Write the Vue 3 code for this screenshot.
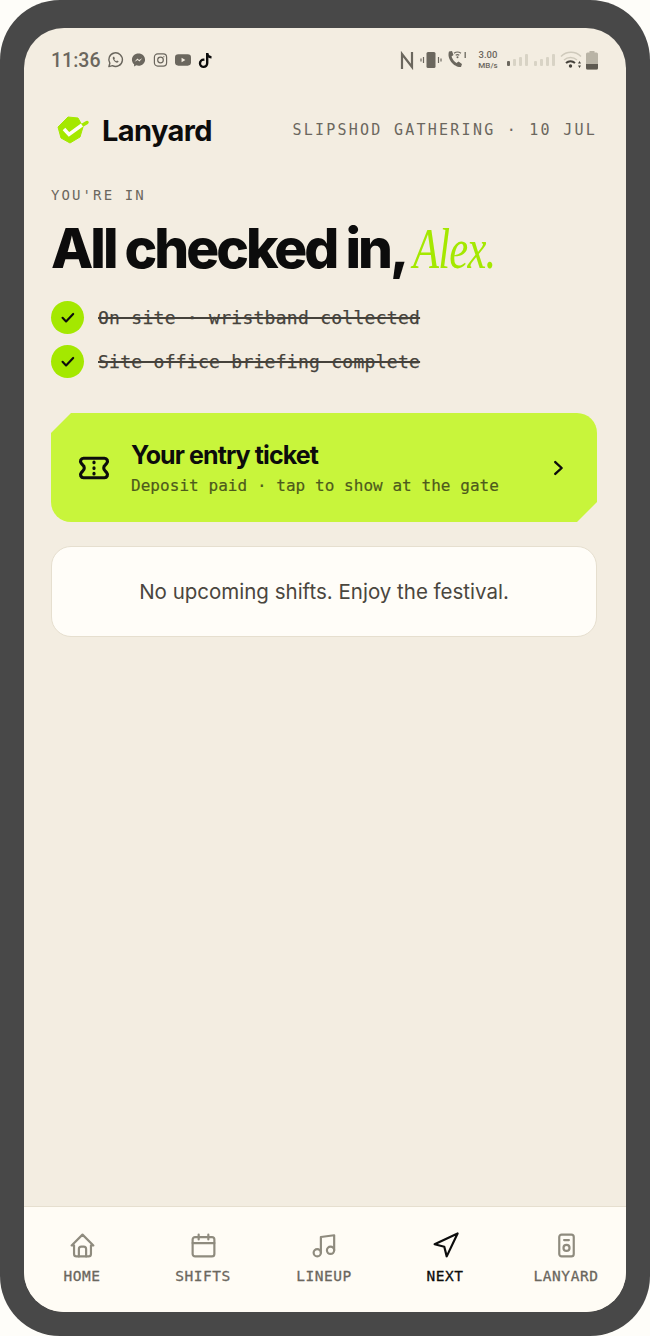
<template>
  <div class="frame">
    <div class="screen">
      <div class="status">
        <div class="status-left">
          <span class="clock">11:36</span>
          <svg width="17" height="18" viewBox="0 0 18 18" fill="none">
            <path d="M2 16l1-3.600A7.200 7.200 0 1 1 5.800 15z" stroke="#6b675e" stroke-width="1.500" stroke-linejoin="round"/>
            <path d="M6.600 5.600c-.8.700-.7 2 .4 3.600s2.500 2.600 3.600 2.600c1 0 1.600-.6 1.700-1.400l-1.700-.9-.8.800c-.9-.4-1.700-1.200-2.100-2.100l.7-.8-.8-1.800z" fill="#6b675e"/>
          </svg>
          <svg width="15" height="16" viewBox="0 0 16 16">
            <path d="M8 1C4 1 1 3.900 1 7.600c0 2 .9 3.700 2.300 4.900V15l2.300-1.300c.8.200 1.600.3 2.400.3 4 0 7-2.900 7-6.400C15 3.900 12 1 8 1z" fill="#6b675e"/>
            <path d="M3.800 9.800l3-3.400 1.800 1.700 3.400-1.900-3 3.400-1.800-1.700z" fill="#f3ede1"/>
          </svg>
          <svg width="15" height="16" viewBox="0 0 16 16" fill="none" stroke="#6b675e">
            <rect x="1.500" y="1.500" width="13" height="13" rx="3.500" stroke-width="1.300"/>
            <circle cx="8" cy="8" r="3" stroke-width="1.300"/>
            <circle cx="11.600" cy="4.400" r=".6" fill="#6b675e" stroke="none"/>
          </svg>
          <svg width="16" height="14" viewBox="0 0 17 14">
            <rect x="0" y="1" width="17" height="12" rx="3.500" fill="#6b675e"/>
            <path d="M7 4.500v5l4-2.500z" fill="#f3ede1"/>
          </svg>
          <svg width="15" height="17" viewBox="0 0 15 17">
            <path d="M8 1h2.400c.2 1.800 1.300 2.900 3.100 3.100v2.400c-1.200 0-2.200-.4-3.100-1v5.800a4.800 4.800 0 1 1-4.800-4.800l.8.100v2.500a2.400 2.400 0 1 0 1.600 2.200z" fill="#0c0c0c"/>
          </svg>
        </div>
        <div class="status-right">
          <svg width="14" height="19" viewBox="0 0 14 19" fill="none" stroke="#6b675e" stroke-width="2.200">
            <path d="M2 18V3l10 13V1" />
          </svg>
          <svg class="gap6" width="22" height="18" viewBox="0 0 22 18">
            <rect x="6.500" y="1" width="9" height="16" rx="1.500" fill="#6b675e"/>
            <path d="M3.500 6v6M1 7.500v3M18.500 6v6M21 7.500v3" stroke="#6b675e" stroke-width="1.200"/>
          </svg>
          <svg class="gap4" width="22" height="20" viewBox="0 0 22 20">
            <path d="M3 1.500L6 1l1.500 4-2 1.500c.8 2.500 2.700 5 5 6.500l2-1.500 3.500 2.500-1 3C8 17.500 .5 9 3 1.500z" fill="#6b675e"/>
            <path d="M8 3.200a6 6 0 0 1 7 0M9.700 5.200a3.400 3.400 0 0 1 3.600 0" stroke="#6b675e" stroke-width="1.100" fill="none"/>
            <circle cx="11.500" cy="7.300" r="1" fill="#6b675e"/>
            <path d="M19.200 2v6" stroke="#6b675e" stroke-width="1.300"/>
          </svg>
          <div class="speed"><span>3.00</span><span class="unit">MB/s</span></div>
          <svg class="bars" width="21" height="12" viewBox="0 0 21 12">
            <rect x="0" y="7" width="3" height="5" rx="1" fill="#6b675e"/>
            <rect x="6" y="5" width="3" height="7" rx="1" fill="#d8d3c5"/>
            <rect x="12" y="3" width="3" height="9" rx="1" fill="#d8d3c5"/>
            <rect x="18" y="0" width="3" height="12" rx="1" fill="#d8d3c5"/>
          </svg>
          <svg class="gap6" width="21" height="12" viewBox="0 0 21 12">
            <rect x="0" y="7" width="3" height="5" rx="1" fill="#d8d3c5"/>
            <rect x="6" y="5" width="3" height="7" rx="1" fill="#d8d3c5"/>
            <rect x="12" y="3" width="3" height="9" rx="1" fill="#d8d3c5"/>
            <rect x="18" y="0" width="3" height="12" rx="1" fill="#d8d3c5"/>
          </svg>
          <svg class="wifi" width="22" height="18" viewBox="0 0 22 18" fill="none">
            <path d="M1 5.500a14 14 0 0 1 20 0" stroke="#cfcabc" stroke-width="1.500"/>
            <path d="M4 9a10 10 0 0 1 13 0" stroke="#cfcabc" stroke-width="1.500"/>
            <path d="M6 12a7 7 0 0 1 9 0" stroke="#45423b" stroke-width="2"/>
            <circle cx="10.500" cy="15" r="1.700" fill="#45423b"/>
            <path d="M19.500 10l-1.500 2.500h3zM19.500 17l-1.500-2.500h3z" fill="#45423b"/>
          </svg>
          <svg class="gap4" width="12" height="19" viewBox="0 0 12 19">
            <rect x="3.500" y="0" width="5" height="2" fill="#b9b4a6"/>
            <rect x="0" y="1.500" width="12" height="17" rx="1.500" fill="#b9b4a6"/>
            <path d="M0 13h12v4a1.500 1.500 0 0 1-1.500 1.500h-9A1.500 1.500 0 0 1 0 17z" fill="#5e5a51"/>
          </svg>
        </div>
      </div>

      <header class="brand-row">
        <div class="brand">
          <svg class="logo" width="36" height="30" viewBox="0 0 36 30">
            <path d="M12 1L22 2l5 9-3 10-10 6-9-5-3-11z" fill="#a4e800" stroke="#a4e800" stroke-linejoin="round"/>
            <path d="M25 10l6-3.500" fill="none" stroke="#a4e800" stroke-width="3.500" stroke-linecap="round"/>
            <path d="M8 13l5 5.500L26 9" fill="none" stroke="#fffdf8" stroke-width="3.500"/>
          </svg>
          <span class="brand-name">Lanyard</span>
        </div>
        <span class="event">SLIPSHOD GATHERING · 10 JUL</span>
      </header>

      <main class="content">
        <div class="eyebrow">YOU'RE IN</div>
        <h1 class="headline">All checked in, <em class="name">Alex.</em></h1>

        <ul class="done-list">
          <li v-for="item in doneItems" :key="item" class="done-item">
            <span class="tick">
              <svg width="17" height="17" viewBox="0 0 24 24" fill="none" stroke="#0c0c0c" stroke-width="3" stroke-linecap="round" stroke-linejoin="round">
                <path d="M5 12.500l5 5L20 7" />
              </svg>
            </span>
            <span class="done-text">{{ item }}</span>
          </li>
        </ul>

        <div class="ticket">
          <svg class="ticket-icon" width="36" height="36" viewBox="0 0 24 24" fill="none" stroke="#0c0c0c" stroke-width="2.100" stroke-linecap="round" stroke-linejoin="round">
            <path d="M12 8v.5M12 11.800v.5M12 15.500v.5" />
            <path d="M5 5.500h14a2 2 0 0 1 1.500 3.300L19.500 10a2.500 2.500 0 0 0 0 4l1 1.200a2 2 0 0 1-1.500 3.300H5a2 2 0 0 1-1.500-3.300l1-1.200a2.500 2.500 0 0 0 0-4L3.500 8.800A2 2 0 0 1 5 5.500" />
          </svg>
          <div class="ticket-body">
            <div class="ticket-title">Your entry ticket</div>
            <div class="ticket-sub">Deposit paid · tap to show at the gate</div>
          </div>
          <svg width="22" height="22" viewBox="0 0 24 24" fill="none" stroke="#0c0c0c" stroke-width="2.600" stroke-linecap="round" stroke-linejoin="round">
            <path d="M9 5.500l7 6.500-7 6.500" />
          </svg>
        </div>

        <div class="empty">No upcoming shifts. Enjoy the festival.</div>
      </main>

      <nav class="tabs">
        <div v-for="tab in tabs" :key="tab.label" class="tab" :class="{ active: tab.active }">
          <svg width="29" height="29" viewBox="0 0 24 24" fill="none" stroke="currentColor" stroke-width="1.800" stroke-linecap="round" stroke-linejoin="round">
            <path v-for="d in tab.paths" :key="d" :d="d" />
          </svg>
          <span class="tab-label">{{ tab.label }}</span>
        </div>
      </nav>
    </div>
  </div>
</template>

<script setup>
const doneItems = [
  'On site · wristband collected',
  'Site office briefing complete'
];

const tabs = [
  {
    label: 'HOME',
    paths: [
      'M5 12H3l9-9 9 9h-2',
      'M5 12v7a2 2 0 0 0 2 2h10a2 2 0 0 0 2-2v-7',
      'M9 21v-6a2 2 0 0 1 2-2h2a2 2 0 0 1 2 2v6'
    ]
  },
  {
    label: 'SHIFTS',
    paths: [
      'M5 5h14a2 2 0 0 1 2 2v12a2 2 0 0 1-2 2H5a2 2 0 0 1-2-2V7a2 2 0 0 1 2-2z',
      'M8 3v4',
      'M16 3v4',
      'M3 10h18'
    ]
  },
  {
    label: 'LINEUP',
    paths: [
      'M9 18V5l11-1.500V16',
      'M9 18a3 3 0 1 1-6 0a3 3 0 0 1 6 0z',
      'M20 16a3 3 0 1 1-6 0a3 3 0 0 1 6 0z'
    ]
  },
  {
    label: 'NEXT',
    active: true,
    paths: ['M3 11l19-9-9 19-2-8z']
  },
  {
    label: 'LANYARD',
    paths: [
      'M8 3h8a2 2 0 0 1 2 2v14a2 2 0 0 1-2 2H8a2 2 0 0 1-2-2V5a2 2 0 0 1 2-2z',
      'M10 7.500h4',
      'M14.500 14a2.500 2.500 0 1 1-5 0a2.500 2.500 0 0 1 5 0z'
    ]
  }
];
</script>

<style>
body {
  background: #fefdf9;
}
</style>

<style scoped>
.frame {
  width: 650px;
  height: 1336px;
  box-sizing: border-box;
  padding: 28px 24px 24px;
  background: #484848;
  border-radius: 60px;
}

.screen {
  height: 100%;
  display: flex;
  flex-direction: column;
  background: #f3ede1;
  border-radius: 40px;
  overflow: hidden;
}

.status {
  display: flex;
  justify-content: space-between;
  align-items: center;
  height: 20px;
  padding: 22px 28px 0 27px;
  color: #6b675e;
}

.status-left {
  display: flex;
  align-items: center;
  gap: 7px;
}

.clock {
  font-family: Roboto, sans-serif;
  font-weight: 500;
  font-size: 19.500px;
}

.status-right {
  display: flex;
  align-items: center;
}

.gap6 {
  margin-left: 6px;
}

.gap4 {
  margin-left: 4px;
}

.wifi {
  margin-left: 5px;
}

.bars {
  margin-left: 9px;
}

.speed {
  width: 20px;
  margin-left: 10px;
  display: flex;
  flex-direction: column;
  align-items: center;
  font-family: Roboto, sans-serif;
  font-weight: 500;
  font-size: 9.500px;
  line-height: 11px;
}

.speed .unit {
  font-size: 8px;
}

.brand-row {
  display: flex;
  justify-content: space-between;
  align-items: center;
  padding: 0 29px 0 32px;
  margin-top: 43px;
}

.brand {
  display: flex;
  align-items: center;
  gap: 10px;
}

.brand-name {
  font-family: Inter, sans-serif;
  font-weight: 700;
  font-size: 29px;
  letter-spacing: -0.600px;
  color: #0c0c0c;
}

.event {
  margin-bottom: 2px;
  font-family: "DejaVu Sans Mono", monospace;
  font-size: 15px;
  letter-spacing: 2.250px;
  color: #6b675e;
}

.content {
  flex: 1;
  padding: 0 29px 0 27px;
}

.eyebrow {
  font-family: "DejaVu Sans Mono", monospace;
  font-size: 14px;
  letter-spacing: 2.100px;
  color: #6b675e;
  margin-top: 39px;
}

.headline {
  margin: 13px 0 0;
  font-family: Inter, sans-serif;
  font-weight: 800;
  font-size: 55px;
  line-height: 64px;
  letter-spacing: -3px;
  color: #0c0c0c;
  white-space: nowrap;
}

.name {
  display: inline-block;
  font-family: "Liberation Serif", serif;
  font-weight: 400;
  font-style: italic;
  font-size: 56px;
  letter-spacing: -1px;
  color: #a4e800;
  transform: scaleX(0.76);
  transform-origin: left center;
}

.done-list {
  list-style: none;
  margin: 20px 0 0;
  padding: 0;
  display: flex;
  flex-direction: column;
  gap: 11px;
}

.done-item {
  display: flex;
  align-items: center;
  gap: 14px;
}

.tick {
  width: 33px;
  height: 33px;
  border-radius: 50%;
  background: #a4e800;
  display: flex;
  align-items: center;
  justify-content: center;
}

.done-text {
  font-family: "DejaVu Sans Mono", monospace;
  font-size: 18px;
  letter-spacing: 0.270px;
  color: #45423b;
  text-decoration: line-through;
  text-decoration-thickness: 1.500px;
  -webkit-text-stroke: 0.250px #45423b;
}

.ticket {
  height: 109px;
  margin-top: 35px;
  box-sizing: border-box;
  padding: 0 28px 0 25px;
  display: flex;
  align-items: center;
  background: #c8f53b;
  border-radius: 0 20px 0 20px;
  clip-path: polygon(20px 0, 100% 0, 100% calc(100% - 20px), calc(100% - 20px) 100%, 0 100%, 0 20px);
}

.ticket-body {
  flex: 1;
  margin-left: 19px;
}

.ticket-title {
  font-family: Inter, sans-serif;
  font-weight: 700;
  font-size: 25px;
  letter-spacing: -0.900px;
  color: #0c0c0c;
}

.ticket-sub {
  font-family: "DejaVu Sans Mono", monospace;
  font-size: 16px;
  letter-spacing: 0.050px;
  color: #4d5a1c;
  margin-top: 6px;
  -webkit-text-stroke: 0.200px #4d5a1c;
}

.empty {
  height: 91px;
  box-sizing: border-box;
  margin-top: 24px;
  display: flex;
  align-items: center;
  justify-content: center;
  background: #fffdf8;
  border: 1px solid #e6dfcf;
  border-radius: 20px;
  font-family: Inter, sans-serif;
  font-size: 20.500px;
  color: #4a463e;
}

.tabs {
  height: 106px;
  box-sizing: border-box;
  display: grid;
  grid-template-columns: repeat(5, 121px);
  margin-left: -2.500px;
  padding-top: 24px;
  background: #fffcf5;
  border-top: 1px solid #e6dfcf;
}

.tab {
  display: flex;
  flex-direction: column;
  align-items: center;
  gap: 8px;
  color: #8f8b7e;
}

.tab-label {
  font-family: "DejaVu Sans Mono", monospace;
  font-size: 14.500px;
  letter-spacing: 0.550px;
  color: #6b675e;
  -webkit-text-stroke: 0.300px #6b675e;
}

.tab.active {
  color: #0c0c0c;
}

.tab.active .tab-label {
  color: #0c0c0c;
  -webkit-text-stroke-color: #0c0c0c;
}
</style>
